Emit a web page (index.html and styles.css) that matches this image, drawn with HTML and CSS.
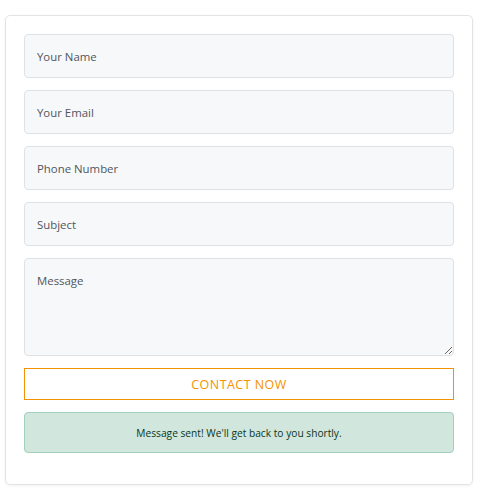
FILE: index.html
```html
<!DOCTYPE html>
<html>
<head>
<meta charset="utf-8">
<link rel="stylesheet" href="styles.css">
</head>
<body>
<div class="card">
  <form class="form">
    <input class="field" type="text" placeholder="Your Name">
    <input class="field" type="email" placeholder="Your Email">
    <input class="field" type="tel" placeholder="Phone Number">
    <input class="field" type="text" placeholder="Subject">
    <textarea class="field area" placeholder="Message"></textarea>
    <button class="btn" type="button">CONTACT NOW</button>
    <div class="alert">Message sent! We'll get back to you shortly.</div>
  </form>
</div>
</body>
</html>
```
FILE: styles.css
```css
html, body { margin: 0; background: #fff; }
body { padding: 15px 12px 9px 5px; font-family: "Open Sans", "Noto Sans", sans-serif; }
.card {
  border: 1px solid #e2e3e5;
  border-radius: 5px;
  box-shadow: 0 1px 3px rgba(0,0,0,0.06);
  padding: 18px 18px 31px 18px;
}
.form { display: flex; flex-direction: column; gap: 12px; margin: 0; }
.field {
  box-sizing: border-box;
  height: 44px;
  width: 100%;
  margin: 0;
  padding: 0 12px;
  border: 1px solid #dee2e6;
  border-radius: 4px;
  background: #f7f8fa;
  font-family: inherit;
  font-size: 11.4px;
  color: #333;
  outline: none;
}
.field::placeholder { color: #50565c; opacity: 1; }
.area { height: 98px; padding: 14px 12px; resize: vertical; display: block; }
.btn {
  box-sizing: border-box;
  height: 32px;
  margin: 0;
  border: 1px solid #f39200;
  border-radius: 0;
  background: #fff;
  color: #f39200;
  font-family: inherit;
  font-size: 12.5px;
  font-weight: 500;
  letter-spacing: 0.45px;
  cursor: pointer;
}
.alert {
  box-sizing: border-box;
  height: 41px;
  display: flex;
  align-items: center;
  justify-content: center;
  border: 1px solid #a3cfbb;
  border-radius: 4px;
  background: #d1e7dd;
  color: #0a3622;
  font-size: 10.2px;
}
```
